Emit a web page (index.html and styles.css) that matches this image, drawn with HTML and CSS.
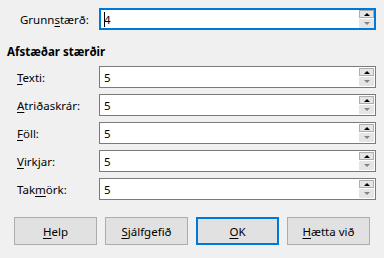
FILE: index.html
```html
<html>
  <head>
    <meta name="viewport" content="width=device-width, initial-scale=1">
    <link rel="stylesheet" href="styles.css">
  </head>
  <body>
    <div class="dialog">
      <div class="row top-row">
        <label class="label">Grunn<u>s</u>tærð:</label>
        <div class="field focused">
          <span class="value"><span class="caret"></span>4</span>
          <div class="spin">
            <div class="up"><span class="arrow-up"></span></div>
            <div class="down"><span class="arrow-down"></span></div>
          </div>
        </div>
      </div>
      <div class="heading">Afstæðar stærðir</div>
      <div class="rows">
        <div class="row">
          <label class="label"><u>T</u>exti:</label>
          <div class="field">
            <span class="value">5</span>
            <div class="spin">
              <div class="up"><span class="arrow-up"></span></div>
              <div class="down"><span class="arrow-down"></span></div>
            </div>
          </div>
        </div>
        <div class="row">
          <label class="label"><u>A</u>triðaskrár:</label>
          <div class="field">
            <span class="value">5</span>
            <div class="spin">
              <div class="up"><span class="arrow-up"></span></div>
              <div class="down"><span class="arrow-down"></span></div>
            </div>
          </div>
        </div>
        <div class="row">
          <label class="label"><u>F</u>öll:</label>
          <div class="field">
            <span class="value">5</span>
            <div class="spin">
              <div class="up"><span class="arrow-up"></span></div>
              <div class="down"><span class="arrow-down"></span></div>
            </div>
          </div>
        </div>
        <div class="row">
          <label class="label"><u>V</u>irkjar:</label>
          <div class="field">
            <span class="value">5</span>
            <div class="spin">
              <div class="up"><span class="arrow-up"></span></div>
              <div class="down"><span class="arrow-down"></span></div>
            </div>
          </div>
        </div>
        <div class="row">
          <label class="label">Tak<u>m</u>örk:</label>
          <div class="field">
            <span class="value">5</span>
            <div class="spin">
              <div class="up"><span class="arrow-up"></span></div>
              <div class="down"><span class="arrow-down"></span></div>
            </div>
          </div>
        </div>
      </div>
      <div class="buttons">
        <button class="btn"><u>H</u>elp</button>
        <button class="btn"><u>S</u>jálfgefið</button>
        <button class="btn default"><u>O</u>K</button>
        <button class="btn"><u>H</u>ætta við</button>
      </div>
    </div>
  </body>
</html>
```

FILE: styles.css
```css
body {
  margin: 0;
  background: #f0f0f0;
  font-family: "Noto Sans", sans-serif;
  font-size: 11.5px;
  color: #000;
}

.dialog {
  width: 384px;
  height: 258px;
  padding-top: 8px;
  box-sizing: border-box;
}

.row {
  display: flex;
  align-items: center;
  height: 22px;
  padding-left: 17px;
}

.top-row {
  padding-left: 20px;
}

.label {
  width: 82px;
  flex-shrink: 0;
}

.top-row .label {
  width: 79px;
}

u {
  text-decoration-thickness: 1px;
  text-underline-offset: 2px;
}

.heading {
  font-weight: bold;
  padding-left: 7px;
  margin-top: 13px;
  height: 17px;
  line-height: 17px;
}

.rows {
  display: flex;
  flex-direction: column;
  gap: 6px;
  margin-top: 6px;
}

.field {
  display: flex;
  align-items: center;
  justify-content: space-between;
  width: 277px;
  height: 22px;
  box-sizing: border-box;
  border: 1px solid #7a7a7a;
  background: #fff;
  padding: 0 1px 0 4px;
}

.field.focused {
  border: 2px solid #0078d7;
  padding: 0 0 0 3px;
}

.value {
  display: flex;
  align-items: center;
}

.caret {
  display: inline-block;
  width: 1px;
  height: 15px;
  background: #000;
  margin-right: -1px;
}

.spin {
  display: flex;
  flex-direction: column;
  gap: 1px;
}

.up, .down {
  width: 15px;
  height: 8px;
  box-sizing: border-box;
  background: #e5e5e5;
  display: flex;
  align-items: center;
  justify-content: center;
}

.up {
  border: 1px solid #adadad;
}

.down {
  height: 9px;
}

.arrow-up {
  width: 0;
  height: 0;
  border-left: 3px solid transparent;
  border-right: 3px solid transparent;
  border-bottom: 3px solid #000;
}

.arrow-down {
  width: 0;
  height: 0;
  border-left: 3px solid transparent;
  border-right: 3px solid transparent;
  border-top: 3px solid #838383;
}

.buttons {
  display: flex;
  gap: 8px;
  padding-left: 14px;
  margin-top: 17px;
}

.btn {
  width: 83px;
  height: 28px;
  box-sizing: border-box;
  background: #e1e1e1;
  border: 1px solid #adadad;
  font-family: "Noto Sans", sans-serif;
  font-size: 11.5px;
  color: #000;
  padding: 0;
}

.btn.default {
  border: 2px solid #0078d7;
}
```
